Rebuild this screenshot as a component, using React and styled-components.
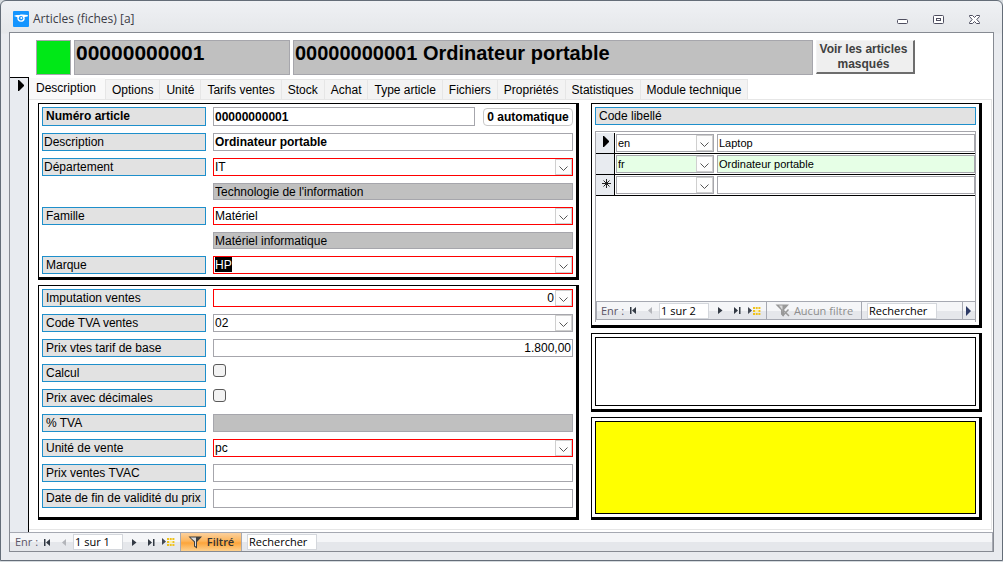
/* ------------------------- External Dependencies -------------------------- */
import React from 'react'
import styled, { createGlobalStyle, css } from 'styled-components'

/* --------------------------- Global Stylesheet ---------------------------- */
const GlobalStyle = createGlobalStyle`
  *, *::before, *::after {
    box-sizing: border-box;
  }

  body {
    margin: 0;
    background: #d5dade;
    color: #000;
    font: 12px/16px "Liberation Sans", Arial, sans-serif;
  }

  button, input, select, textarea {
    margin: 0;
    padding: 0;
    border: 0;
    border-radius: 0;
    background: transparent;
    color: inherit;
    font: inherit;
    outline: none;
  }
`

/* --------------------------- Styled Components ---------------------------- */
const uiFont = css`
  font-family: "Open Sans", "Noto Sans", sans-serif;
`

/*--- Window ---*/
const Window = styled.div`
  display: flex;
  flex-direction: column;
  min-height: calc(100vh - 1px);
  padding: 0 8px 8px;
  border: 1px solid #646d78;
  border-radius: 6px 6px 0 0;
  background: linear-gradient(#eff1f4, #e5e7ea 32px, #e9ebef 33px);
`

const TitleBar = styled.header`
  display: flex;
  align-items: center;
  gap: 4px;
  height: 31px;
  padding: 5px 13px 0 4px;
  color: #3c3c46;
  ${uiFont}
`

const Title = styled.h1`
  flex: 1;
  margin: 0;
  font-size: 12px;
  font-weight: 400;
`

const WindowButtons = styled.div`
  display: flex;
  gap: 24px;
`

const WindowButton = styled.button`
  display: flex;
  width: 12px;
  height: 12px;
`

const Frame = styled.main`
  display: flex;
  flex: 1;
  flex-direction: column;
  border: 1px solid #868a92;
  background: #fff;
`

/*--- Form header ---*/
const FormHeader = styled.div`
  display: flex;
  gap: 3px;
  height: 44px;
  padding: 7px 78px 2px 26px;
`

const StatusLight = styled.div`
  flex: 0 0 35px;
  border: 1px solid #a6a6ac;
  background: #00e817;
`

const HeaderBox = styled.div`
  flex: ${p => p.$width} ${p => p.$width} ${p => p.$width}px;
  min-width: 0;
  padding: 0 1px;
  border: 1px solid #a6a6ac;
  background: #c0c0c0;
  font-size: ${p => p.$size}px;
  font-weight: 700;
  line-height: 24px;
  white-space: nowrap;
`

const HiddenArticlesButton = styled.button`
  flex: 0 0 99px;
  height: 34px;
  padding-right: 3px;
  border: solid;
  border-width: 1px 2px 2px 1px;
  border-color: #f4f4f4 #6d6d6d #6d6d6d #f4f4f4;
  background: #efefef;
  color: #404040;
  font-weight: 700;
  line-height: 15px;
`

/*--- Form body ---*/
const FormBody = styled.div`
  display: flex;
  flex: 1;
`

const RecordSelector = styled.button`
  display: flex;
  flex: 0 0 19px;
  justify-content: flex-end;
  padding: 2px 3px;
  border: solid #000;
  border-width: 1px 1px 0 0;
  background: #e8ebf0;
`

const TabArea = styled.div`
  display: flex;
  flex: 1;
  flex-direction: column;
  min-width: 0;
  padding: 1px 1px 2px 0;
`

const TabList = styled.div`
  display: flex;
  align-items: flex-end;
  height: 21px;
`

const Tab = styled.button`
  height: 20px;
  padding: 0 6px;
  border: solid #e6e6e6;
  border-width: 1px 0 0 1px;
  background: #f3f3f3;
  white-space: nowrap;

  &:last-child {
    border-right-width: 1px;
  }

  ${p => p.$active && css`
    height: 21px;
    padding: 0 9px 2px 6px;
    border-color: transparent;
    background: #f9f9f9;
  `}
`

const TabPage = styled.div`
  display: grid;
  flex: 1;
  grid-template-columns: 541fr 391fr;
  gap: 12px;
  padding: 3px 9px 9px;
  border: solid #e6e6e6;
  border-width: 1px 1px 1px 0;
`

const Column = styled.div`
  display: flex;
  flex-direction: column;
  gap: 5px;
  min-width: 0;
`

const Panel = styled.section`
  display: flex;
  flex: ${p => (p.$fill ? '1 0 auto' : 'none')};
  flex-direction: column;
  gap: ${p => p.$gap || 7}px;
  min-height: ${p => p.$minHeight || 0}px;
  padding: 3px 3px ${p => p.$bottom || 3}px;
  border: solid #000;
  border-width: 1px 3px 3px 1px;
  background: #fff;
`

/*--- Fields ---*/
const Row = styled.div`
  display: grid;
  grid-template-columns: 164px 1fr;
  column-gap: 7px;
  align-items: start;
`

const Label = styled.label`
  height: ${p => (p.$tall ? 19 : 18)}px;
  padding-left: ${p => (p.$tight ? 1 : 3)}px;
  border: 1px solid #1e8fcb;
  background: #e2e2e2;
  font-weight: ${p => (p.$bold ? 700 : 400)};
  white-space: nowrap;
`

const TextField = styled.input`
  width: 100%;
  min-width: 0;
  height: ${p => (p.$tall ? 19 : 18)}px;
  padding: 0 1px;
  border: 1px solid #a6a6ac;
  background: ${p => p.$fill || '#fff'};
  font-size: ${p => p.$size || 12}px;
  font-weight: ${p => (p.$bold ? 700 : 400)};
  text-align: ${p => p.$align || 'left'};
`

const DerivedField = styled(TextField)`
  grid-column: 2;
  height: ${p => (p.$tall ? 18 : 17)}px;
  background: #c0c0c0;
`

const NumberGroup = styled.div`
  display: flex;
  gap: 8px;
  align-items: center;
`

const AutoButton = styled.button`
  flex: 0 0 90px;
  height: 18px;
  border: 1px solid #c8c8c8;
  border-radius: 4px;
  font-weight: 700;
  white-space: nowrap;
`

const CheckBox = styled.input`
  width: 13px;
  height: 13px;
  border: 1px solid #5a5a5a;
  border-radius: 3px;
  background: #f3f3f3;
  appearance: none;

  &:checked {
    background: #1e8fcb;
  }
`

const ComboBox = styled.div`
  display: grid;
  height: 18px;
  border: 1px solid ${p => (p.$required ? '#ff0000' : '#a6a6ac')};
  background: ${p => p.$fill || '#fff'};
`

const ComboSelect = styled.select`
  grid-area: 1 / 1;
  min-width: 0;
  height: 16px;
  padding: 0 18px 0 1px;
  appearance: none;
  font-size: ${p => p.$size || 12}px;
  text-align-last: ${p => p.$align || 'left'};

  ${p => p.$selected && css`
    justify-self: start;
    height: 15px;
    margin-left: 1px;
    padding: 0;
    background: #000;
    color: #fff;
  `}
`

const ComboArrow = styled.span`
  display: flex;
  grid-area: 1 / 1;
  align-items: center;
  justify-content: center;
  justify-self: end;
  width: 17px;
  height: 16px;
  padding-top: 3px;
  border: 1px solid #cfcfcf;
  background: #fdfdfd;
  pointer-events: none;
`

/*--- Wording list ---*/
const SubForm = styled.div`
  display: flex;
  flex: 1;
  flex-direction: column;
  padding: 1px 0 2px;
  border: solid #a6a6ac;
  border-width: 1px 1px 0 1px;
`

const WordingTable = styled.table`
  width: 100%;
  border-spacing: 0;
  table-layout: fixed;

  td {
    height: 21px;
    padding: 1px 0 1px 1px;
    border-bottom: 1px solid #000;
  }
`

const SelectorCell = styled.td`
  width: 19px;
  border-right: 1px solid #000;
  background: #e8ebf0;
  line-height: 0;
  text-align: center;

  svg {
    margin: 0 0 3px 2px;
  }
`

const LanguageCell = styled.td`
  width: 101px;

  ${ComboBox} {
    width: 98px;
  }
`

const Note = styled.textarea`
  flex: 1;
  width: 100%;
  border: 1px solid #000;
  background: ${p => p.$fill || '#fff'};
  resize: none;
`

/*--- Record navigation ---*/
const NavBar = styled.nav`
  display: flex;
  align-items: stretch;
  height: 19px;
  margin-top: auto;
  border: solid #a6a9b2;
  border-width: ${p => (p.$boxed ? '1px 0 1px 1px' : '1px 1px 0 0')};
  background: linear-gradient(#f5f6f8 50%, #e5e7eb 50%);
  font-size: 11px;
  line-height: 18px;
  ${uiFont}
`

const NavLabel = styled.span`
  flex: 0 0 ${p => p.$width}px;
  padding-left: ${p => p.$indent}px;
  color: #5c5567;
  white-space: nowrap;
`

const NavButton = styled.button`
  display: flex;
  flex: 0 0 17px;
  align-items: center;
  justify-content: center;
`

const NavInput = styled.input`
  flex: 0 0 ${p => p.$width}px;
  width: ${p => p.$width}px;
  height: 16px;
  margin: 1px ${p => p.$after}px 0 0;
  padding: 0 1px;
  border: 1px solid #d4d7dc;
  background: #fff;

  &::placeholder {
    color: #000;
    opacity: 1;
  }
`

const FilterButton = styled.button`
  display: flex;
  align-items: center;
  justify-content: center;
  gap: 4px;
  width: ${p => (p.$active ? 62 : 96)}px;
  margin: 0 5px 0 3px;
  border: solid #a6a9b2;
  border-width: 0 1px;
  color: #8d8d8d;
  white-space: nowrap;

  ${p => p.$active && css`
    background: linear-gradient(#fbd09d, #fdb55b 45%, #fca53b 55%, #fdd08d);
    color: #333;
    font-weight: 600;
  `}
`

const ScrollButton = styled.button`
  display: flex;
  align-items: center;
  justify-content: center;
  width: 13px;
  margin-left: auto;
  border-left: 1px solid #a6a9b2;
`

/* --------------------------------- Icons ---------------------------------- */
const AppIcon = () => (
  <svg width="16" height="16" viewBox="0 0 16 16">
    <rect width="16" height="16" rx="1" fill="#1495ff" />
    <path d="M1 5C3 3.500 5 4 6.500 4C9 3 12 4 15 4L14.500 5.500L11.500 6C12.500 9 10.500 11 8 10.800C5.500 10.800 4 9 4.300 6.200Z" fill="#fff" />
    <circle cx="8" cy="7.200" r="2.200" fill="#1495ff" />
    <circle cx="8.300" cy="7" r="1" fill="#fff" />
  </svg>
)

const MinimizeIcon = () => (
  <svg width="12" height="12" viewBox="0 0 12 12" fill="#fff" stroke="#4f4f60">
    <rect x="0.500" y="6.500" width="10" height="4" rx="1" />
  </svg>
)

const MaximizeIcon = () => (
  <svg width="12" height="12" viewBox="0 0 12 12" fill="#fff" stroke="#4f4f60">
    <rect x="0.500" y="2.500" width="10" height="8" rx="1" />
    <rect x="3.500" y="5.500" width="4" height="2" />
  </svg>
)

const CloseIcon = () => (
  <svg width="12" height="12" viewBox="0 0 12 12" fill="#fff" stroke="#4f4f60">
    <path d="M.5 2.500H3.500L5.500 4.500L7.500 2.500H10.500V3.500L7.800 6.500L10.500 9.500V10.500H7.500L5.500 8.500L3.500 10.500H.5V9.500L3.200 6.500L.5 3.500Z" />
  </svg>
)

const CurrentIcon = () => (
  <svg width="7" height="12" viewBox="0 0 7 12">
    <path d="M0 0H1L6 5V6L1 11H0Z" />
  </svg>
)

const NewRecordIcon = () => (
  <svg width="9" height="9" viewBox="0 0 9 9" stroke="#222">
    <path d="M4.500 0V9M0 4.500H9M1.500 1.500L7.500 7.500M7.500 1.500L1.500 7.500" />
  </svg>
)

const ChevronIcon = () => (
  <svg width="9" height="6" viewBox="0 0 9 6" fill="none" stroke="#555">
    <path d="M.5 .5L4.500 4.500L8.500 .5" />
  </svg>
)

const FirstIcon = () => (
  <svg width="7" height="7" viewBox="0 0 7 7" fill="#333a44">
    <path d="M0 0H1.500V7H0ZM6 0V7L2 3.500Z" />
  </svg>
)

const PreviousIcon = () => (
  <svg width="5" height="7" viewBox="0 0 5 7" fill="#b3b5ba">
    <path d="M4 0V7L0 3.500Z" />
  </svg>
)

const NextIcon = () => (
  <svg width="5" height="7" viewBox="0 0 5 7" fill="#333a44">
    <path d="M0 0V7L4.500 3.500Z" />
  </svg>
)

const LastIcon = () => (
  <svg width="7" height="7" viewBox="0 0 7 7" fill="#333a44">
    <path d="M0 0V7L4 3.500ZM5 0H6.500V7H5Z" />
  </svg>
)

const AddIcon = () => (
  <svg width="13" height="8" viewBox="0 0 13 8">
    <path d="M0 0V7L4 3.500Z" fill="#444a54" />
    <path d="M5 1H12.500M5 4H12.500M5 7H12.500" stroke="#efc21c" strokeWidth="2" strokeDasharray="2 .7" />
    <circle cx="8.800" cy="4" r="1.500" fill="#fff2a0" />
  </svg>
)

const ScrollIcon = () => (
  <svg width="6" height="10" viewBox="0 0 6 10" fill="#2d3a66">
    <path d="M0 0L5 5L0 10Z" />
  </svg>
)

const FunnelIcon = ({ off }) => (
  <svg width="15" height="13" viewBox="0 0 15 13">
    <path d="M.5 .5H14L9 6V12.500L6 10.500V6Z" fill={off ? '#999' : '#3f3f3f'} />
    <path d={off ? 'M4 1.500H7.500V8L7 5.500Z' : 'M2.500 1.500H8V10.500L7 10V5.500Z'} fill="#dcdcdc" />
    {off && <path d="M7.500 5.500L14 12M13.500 5.500L7.500 12" stroke="#999" strokeWidth="1.500" />}
  </svg>
)

/* ------------------------------ Components -------------------------------- */
const Combo = ({ id, value, label, required, fill, ...select }) => (
  <ComboBox $required={required} $fill={fill}>
    <ComboSelect id={id} aria-label={label} defaultValue={value} {...select}>
      <option>{value}</option>
    </ComboSelect>
    <ComboArrow><ChevronIcon /></ComboArrow>
  </ComboBox>
)

const Field = ({ id, label, tight, bold, tall, children }) => (
  <Row>
    <Label htmlFor={id} $tight={tight} $bold={bold} $tall={tall}>{label}</Label>
    {children}
  </Row>
)

const RecordNav = ({ position, filtered, boxed }) => (
  <NavBar $boxed={boxed} aria-label="Enregistrements">
    <NavLabel $width={boxed ? 28 : 29} $indent={boxed ? 4 : 5}>Enr :</NavLabel>
    <NavButton aria-label="Premier"><FirstIcon /></NavButton>
    <NavButton aria-label="Précédent"><PreviousIcon /></NavButton>
    <NavInput $width={50} $after={3} aria-label="Position" defaultValue={position} />
    <NavButton aria-label="Suivant"><NextIcon /></NavButton>
    <NavButton aria-label="Dernier"><LastIcon /></NavButton>
    <NavButton aria-label="Nouveau"><AddIcon /></NavButton>
    <FilterButton $active={filtered}>
      <FunnelIcon off={!filtered} />
      {filtered ? 'Filtré' : 'Aucun filtre'}
    </FilterButton>
    <NavInput $width={70} $after={0} aria-label="Rechercher" placeholder="Rechercher" />
    {boxed && <ScrollButton aria-label="Défiler"><ScrollIcon /></ScrollButton>}
  </NavBar>
)

const tabs = [
  'Description', 'Options', 'Unité', 'Tarifs ventes', 'Stock', 'Achat',
  'Type article', 'Fichiers', 'Propriétés', 'Statistiques', 'Module technique'
]

const wordings = [
  { language: 'en', text: 'Laptop', icon: <CurrentIcon /> },
  { language: 'fr', text: 'Ordinateur portable', fill: '#e6ffe6' },
  { language: '', text: '', icon: <NewRecordIcon /> }
]

const Wordings = () => (
  <SubForm>
    <WordingTable>
      <tbody>
        {wordings.map(({ language, text, icon, fill }) => (
          <tr key={language}>
            <SelectorCell>{icon}</SelectorCell>
            <LanguageCell>
              <Combo label="Langue" value={language} fill={fill} $size={11} />
            </LanguageCell>
            <td>
              <TextField aria-label="Libellé" defaultValue={text} $fill={fill} $size={11} />
            </td>
          </tr>
        ))}
      </tbody>
    </WordingTable>
    <RecordNav position="1 sur 2" boxed />
  </SubForm>
)

const App = () => (
  <>
    <GlobalStyle />
    <Window>
      <TitleBar>
        <AppIcon />
        <Title>Articles (fiches) [a]</Title>
        <WindowButtons>
          <WindowButton aria-label="Réduire"><MinimizeIcon /></WindowButton>
          <WindowButton aria-label="Agrandir"><MaximizeIcon /></WindowButton>
          <WindowButton aria-label="Fermer"><CloseIcon /></WindowButton>
        </WindowButtons>
      </TitleBar>
      <Frame>
        <FormHeader>
          <StatusLight />
          <HeaderBox $width={216} $size={21}>00000000001</HeaderBox>
          <HeaderBox $width={520} $size={20}>00000000001 Ordinateur portable</HeaderBox>
          <HiddenArticlesButton>Voir les articles masqués</HiddenArticlesButton>
        </FormHeader>
        <FormBody>
          <RecordSelector aria-label="Sélectionner la fiche"><CurrentIcon /></RecordSelector>
          <TabArea>
            <TabList role="tablist">
              {tabs.map((tab, i) => (
                <Tab key={tab} role="tab" aria-selected={i === 0} $active={i === 0}>{tab}</Tab>
              ))}
            </TabList>
            <TabPage role="tabpanel">
              <Column>
                <Panel>
                  <Field id="number" label="Numéro article" bold tall>
                    <NumberGroup>
                      <TextField id="number" defaultValue="00000000001" $bold $tall />
                      <AutoButton>0 automatique</AutoButton>
                    </NumberGroup>
                  </Field>
                  <Field id="description" label="Description" tight>
                    <TextField id="description" defaultValue="Ordinateur portable" $bold />
                  </Field>
                  <Field id="department" label="Département" tight>
                    <Combo id="department" value="IT" required />
                  </Field>
                  <Row>
                    <DerivedField aria-label="Nom du département" value="Technologie de l'information" readOnly />
                  </Row>
                  <Field id="family" label="Famille">
                    <Combo id="family" value="Matériel" required />
                  </Field>
                  <Row>
                    <DerivedField aria-label="Nom de la famille" value="Matériel informatique" readOnly />
                  </Row>
                  <Field id="brand" label="Marque">
                    <Combo id="brand" value="HP" required $selected />
                  </Field>
                </Panel>
                <Panel $fill $bottom={9}>
                  <Field id="account" label="Imputation ventes">
                    <Combo id="account" value="0" required $align="right" />
                  </Field>
                  <Field id="vat-code" label="Code TVA ventes">
                    <Combo id="vat-code" value="02" />
                  </Field>
                  <Field id="base-price" label="Prix vtes tarif de base">
                    <TextField id="base-price" defaultValue="1.800,00" $align="right" />
                  </Field>
                  <Field id="computed" label="Calcul">
                    <CheckBox id="computed" type="checkbox" />
                  </Field>
                  <Field id="decimals" label="Prix avec décimales">
                    <CheckBox id="decimals" type="checkbox" />
                  </Field>
                  <Field id="vat-rate" label="% TVA">
                    <DerivedField id="vat-rate" value="" readOnly $tall />
                  </Field>
                  <Field id="unit" label="Unité de vente">
                    <Combo id="unit" value="pc" required />
                  </Field>
                  <Field id="gross-price" label="Prix ventes TVAC">
                    <TextField id="gross-price" defaultValue="" />
                  </Field>
                  <Field id="valid-until" label="Date de fin de validité du prix" tall>
                    <TextField id="valid-until" defaultValue="" $tall />
                  </Field>
                </Panel>
              </Column>
              <Column>
                <Panel $minHeight={225} $gap={6}>
                  <Label as="div">Code libellé</Label>
                  <Wordings />
                </Panel>
                <Panel $minHeight={79}>
                  <Note aria-label="Remarque" />
                </Panel>
                <Panel $fill>
                  <Note aria-label="Avertissement" $fill="#ffff00" />
                </Panel>
              </Column>
            </TabPage>
          </TabArea>
        </FormBody>
        <RecordNav position="1 sur 1" filtered />
      </Frame>
    </Window>
  </>
)

/* ---------------------------- Export Package ------------------------------ */
export default App
